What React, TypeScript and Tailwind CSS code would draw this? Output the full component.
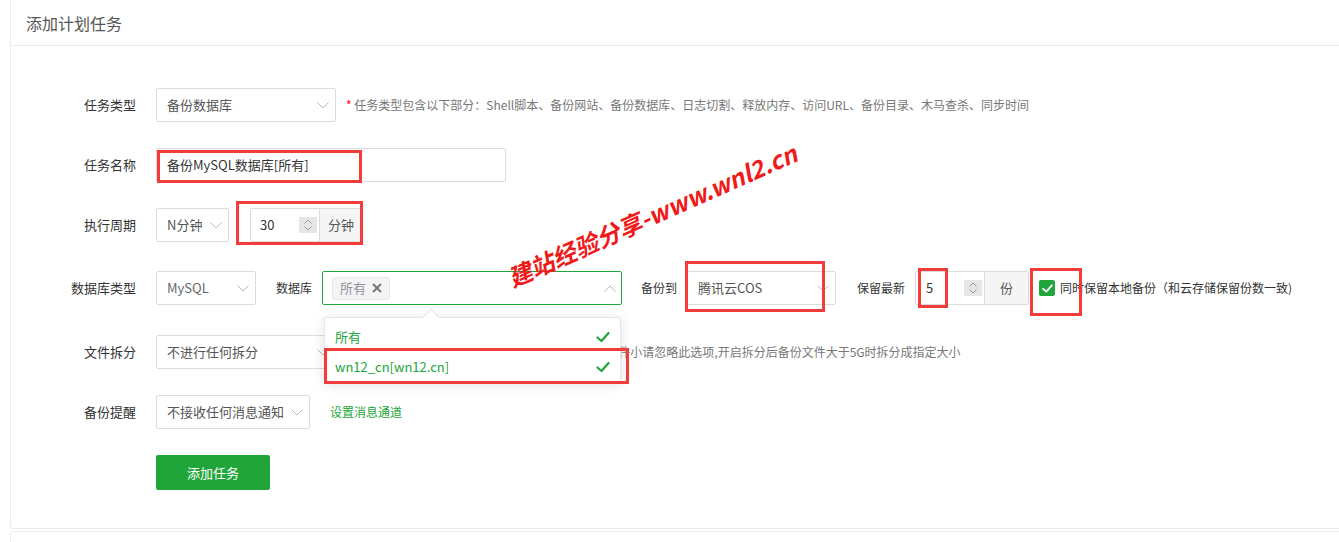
import React from "react";

function Chevron({ up = false, color = "#b8b8b8" }: { up?: boolean; color?: string }) {
  return (
    <svg width="12" height="7" viewBox="0 0 12 7">
      <polyline
        points={up ? "0.5,6.5 6,1 11.5,6.5" : "0.5,0.5 6,6 11.5,0.5"}
        fill="none"
        stroke={color}
        strokeWidth="1"
      />
    </svg>
  );
}

function Spinner() {
  return (
    <div className="w-[18px] h-[16px] bg-[#e6e6e6] flex flex-col items-center justify-center gap-[2px]">
      <svg width="8" height="5" viewBox="0 0 8 5">
        <polyline points="0.5,4.5 4,1 7.5,4.5" fill="none" stroke="#999" strokeWidth="1" />
      </svg>
      <svg width="8" height="5" viewBox="0 0 8 5">
        <polyline points="0.5,0.5 4,4 7.5,0.5" fill="none" stroke="#999" strokeWidth="1" />
      </svg>
    </div>
  );
}

function Check({ size = 14, color = "#20a53a", sw = 2.2 }: { size?: number; color?: string; sw?: number }) {
  return (
    <svg width={size} height={size} viewBox="0 0 14 14">
      <polyline points="1.5,7.5 5.5,11 12.5,3" fill="none" stroke={color} strokeWidth={sw} strokeLinecap="round" strokeLinejoin="round" />
    </svg>
  );
}

function Label({ children }: { children: React.ReactNode }) {
  return <div className="w-[125px] mr-[20px] text-right text-[13px] text-[#333] shrink-0">{children}</div>;
}

function RedBox({ className }: { className: string }) {
  return <div className={"absolute border-[3px] border-[#f23b3b] pointer-events-none " + className} />;
}

export default function App() {
  return (
    <div className="relative w-[1339px] h-[542px] overflow-hidden bg-white font-['Microsoft_YaHei','Noto_Sans_CJK_SC',sans-serif]">
      <div className="ml-[10px] h-[529px] border border-t-0 border-r-0 border-[#ededed] rounded-bl-[4px]">
        {/* header */}
        <div className="h-[46px] border-b border-[#eaeaea] flex items-center pl-[15px] text-[16px] text-[#555]">
          添加计划任务
        </div>

        <div className="pt-[42px]">
          {/* Row 1 */}
          <div className="flex items-center h-[34px]">
            <Label>任务类型</Label>
            <div className="w-[180px] h-[34px] border border-[#dcdcdc] rounded-[2px] flex items-center justify-between pl-[10px] pr-[6px] text-[13px] text-[#555]">
              <span>备份数据库</span>
              <Chevron />
            </div>
            <div className="ml-[10px] text-[12px] text-[#777]">
              <span className="text-[#f00]">*</span> 任务类型包含以下部分：Shell脚本、备份网站、备份数据库、日志切割、释放内存、访问URL、备份目录、木马查杀、同步时间
            </div>
          </div>

          {/* Row 2 */}
          <div className="flex items-center h-[34px] mt-[26px]">
            <Label>任务名称</Label>
            <div className="w-[350px] h-[34px] border border-[#dcdcdc] rounded-[2px] flex items-center pl-[10px] text-[13px] text-[#333]">
              备份MySQL数据库[所有]
            </div>
          </div>

          {/* Row 3 */}
          <div className="flex items-center h-[34px] mt-[26px]">
            <Label>执行周期</Label>
            <div className="w-[73px] h-[34px] border border-[#dcdcdc] rounded-[2px] flex items-center justify-between pl-[10px] pr-[6px] text-[13px] text-[#555]">
              <span>N分钟</span>
              <Chevron />
            </div>
            <div className="ml-[21px] w-[113px] h-[34px] border border-[#dcdcdc] rounded-[2px] flex items-stretch">
              <div className="flex-1 flex items-center justify-between pl-[9px] pr-[2px] text-[13px] text-[#333]">
                <span>30</span>
                <Spinner />
              </div>
              <div className="w-[43px] border-l border-[#dcdcdc] bg-[#f5f5f5] flex items-center justify-center text-[13px] text-[#555]">
                分钟
              </div>
            </div>
          </div>

          {/* Row 4 */}
          <div className="flex items-center h-[34px] mt-[29px]">
            <Label>数据库类型</Label>
            <div className="w-[100px] h-[34px] border border-[#dcdcdc] rounded-[2px] flex items-center justify-between pl-[10px] pr-[6px] text-[13px] text-[#666]">
              <span>MySQL</span>
              <Chevron />
            </div>
            <div className="ml-[20px] text-[12px] text-[#333]">数据库</div>
            <div className="ml-[10px] w-[300px] h-[34px] border border-[#20a53a] rounded-[2px] flex items-center justify-between pl-[9px] pr-[5px]">
              <div className="h-[23px] px-[7px] bg-[#f4f4f5] border border-[#e6e8ec] rounded-[3px] flex items-center gap-[6px] text-[13px] text-[#909399]">
                <span>所有</span>
                <svg width="10" height="10" viewBox="0 0 10 10">
                  <path d="M1 1 L9 9 M9 1 L1 9" stroke="#777" strokeWidth="2" />
                </svg>
              </div>
              <Chevron up />
            </div>
            <div className="ml-[19px] text-[12px] text-[#333]">备份到</div>
            <div className="ml-[8px] w-[151px] h-[34px] border border-[#dcdcdc] rounded-[2px] flex items-center justify-between pl-[12px] pr-[6px] text-[13px] text-[#555]">
              <span>腾讯云COS</span>
              <Chevron />
            </div>
            <div className="ml-[21px] text-[12px] text-[#333]">保留最新</div>
            <div className="ml-[10px] w-[114px] h-[34px] border border-[#dcdcdc] rounded-[2px] flex items-stretch">
              <div className="flex-1 flex items-center justify-between pl-[10px] pr-[2px] text-[13px] text-[#333]">
                <span>5</span>
                <Spinner />
              </div>
              <div className="w-[44px] border-l border-[#dcdcdc] bg-[#f5f5f5] flex items-center justify-center text-[13px] text-[#555]">
                份
              </div>
            </div>
            <div className="ml-[10px] flex items-center">
              <div className="w-[16px] h-[16px] rounded-[2px] bg-[#20a53a] flex items-center justify-center">
                <Check size={11} color="#fff" sw={2.4} />
              </div>
              <span className="ml-[5px] text-[12px] text-[#333]">同时保留本地备份（和云存储保留份数一致)</span>
            </div>
          </div>

          {/* Row 5 */}
          <div className="flex items-center h-[34px] mt-[30px]">
            <Label>文件拆分</Label>
            <div className="w-[180px] h-[34px] border border-[#dcdcdc] rounded-[2px] flex items-center justify-between pl-[10px] pr-[6px] text-[13px] text-[#555]">
              <span>不进行任何拆分</span>
              <Chevron />
            </div>
            <div className="ml-[10px] text-[12px] text-[#777]">
              <span className="text-[#f00]">*</span> 用于超大备份文件上传至云存储时拆分，如备份文件小请忽略此选项,开启拆分后备份文件大于5G时拆分成指定大小
            </div>
          </div>

          {/* Row 6 */}
          <div className="flex items-center h-[34px] mt-[26px]">
            <Label>备份提醒</Label>
            <div className="w-[154px] h-[34px] border border-[#dcdcdc] rounded-[2px] flex items-center justify-between pl-[10px] pr-[6px] text-[13px] text-[#555]">
              <span>不接收任何消息通知</span>
              <Chevron />
            </div>
            <div className="ml-[20px] text-[12px] text-[#20a53a]">设置消息通道</div>
          </div>

          {/* Button */}
          <div className="mt-[26px] ml-[145px]">
            <div className="w-[114px] h-[35px] bg-[#20a53a] rounded-[2px] flex items-center justify-center text-[13px] text-white">
              添加任务
            </div>
          </div>
        </div>
      </div>
      <div className="ml-[10px] mt-[2px] h-[20px] border border-r-0 border-[#ededed] rounded-tl-[4px]" />

      {/* Dropdown */}
      <div className="absolute left-[324px] top-[317px] w-[297px] h-[66px] bg-white border border-[#e4e7ed] rounded-[3px] shadow-[0_2px_12px_rgba(0,0,0,0.12)] pt-[4px]">
        <div className="absolute -top-[7px] left-[100px] w-[12px] h-[12px] rotate-45 bg-white border-l border-t border-[#e4e7ed]" />
        <div className="relative h-[30px] flex items-center justify-between pl-[10px] pr-[10px] text-[13px] text-[#20a53a]">
          <span>所有</span>
          <Check />
        </div>
        <div className="relative h-[30px] flex items-center justify-between pl-[10px] pr-[10px] text-[13px] text-[#20a53a]">
          <span>wn12_cn[wn12.cn]</span>
          <Check />
        </div>
      </div>

      {/* Annotation boxes */}
      <RedBox className="left-[157px] top-[150px] w-[205px] h-[33px]" />
      <RedBox className="left-[236px] top-[201px] w-[127px] h-[44px]" />
      <RedBox className="left-[685px] top-[261px] w-[140px] h-[51px]" />
      <RedBox className="left-[918px] top-[268px] w-[30px] h-[40px]" />
      <RedBox className="left-[1030px] top-[268px] w-[52px] h-[48px]" />
      <RedBox className="left-[324px] top-[348px] w-[305px] h-[36px]" />

      {/* Watermark */}
      <div className="absolute left-[652px] top-[215px] -translate-x-1/2 -translate-y-1/2 -rotate-[24deg] whitespace-nowrap text-[24px] font-bold italic text-[#f01a1a] leading-none">
        建站经验分享-www.wnl2.cn
      </div>
    </div>
  );
}
